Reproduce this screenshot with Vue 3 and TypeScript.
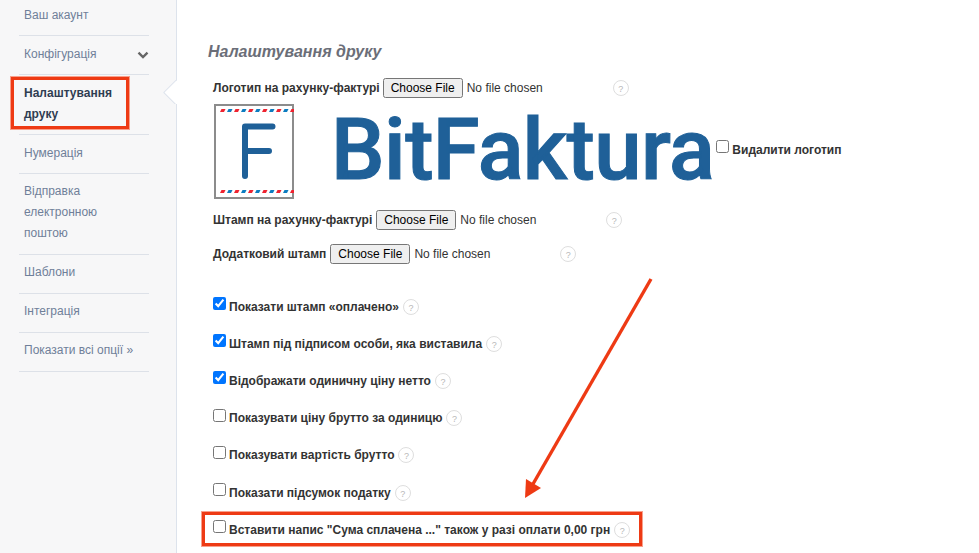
<script setup lang="ts">
const nav: { label: string; active?: boolean; chevron?: boolean }[] = [
  { label: 'Ваш акаунт' },
  { label: 'Конфігурація', chevron: true },
  { label: 'Налаштування друку', active: true },
  { label: 'Нумерація' },
  { label: 'Відправка електронною поштою' },
  { label: 'Шаблони' },
  { label: 'Інтеграція' },
  { label: 'Показати всі опції »' },
]
const files = [
  { label: 'Штамп на рахунку-фактурі', cls: 'f1' },
  { label: 'Додатковий штамп', cls: 'f2' },
]
const checks = [
  { label: 'Показати штамп «оплачено»', on: true },
  { label: 'Штамп під підписом особи, яка виставила', on: true },
  { label: 'Відображати одиничну ціну нетто', on: true },
  { label: 'Показувати ціну брутто за одиницю', on: false },
  { label: 'Показувати вартість брутто', on: false },
  { label: 'Показати підсумок податку', on: false },
  { label: 'Вставити напис "Сума сплачена ..." також у разі оплати 0,00 грн', on: false, boxed: true },
]
const dashes = Array.from({ length: 11 }, (_, i) => i)
</script>

<template>
  <div class="page">
    <aside class="side">
      <ul class="nav">
        <li v-for="n in nav" :key="n.label" :class="{ active: n.active }">
          <span class="nav-text">{{ n.label }}</span>
          <svg v-if="n.chevron" class="chev" width="12" height="8" viewBox="0 0 12 8">
            <path d="M1.5 1.6 L6 6 L10.5 1.6" fill="none" stroke="#666" stroke-width="2.4" />
          </svg>
          <span v-if="n.active" class="mark"></span>
        </li>
      </ul>
      <span class="notch"></span>
    </aside>
    <main class="main">
      <h1>Налаштування друку</h1>
      <div class="row first">
        <label class="lbl">Логотип на рахунку-фактурі</label>
        <input class="file" type="file" />
        <span class="help">?</span>
      </div>
      <div class="logo-row">
        <svg class="mark-logo" width="80" height="95" viewBox="0 0 80 95">
          <rect x="1" y="1" width="78" height="93" fill="#fff" stroke="#8c8c8c" stroke-width="2" />
          <g v-for="y in [5, 86]" :key="y">
            <path
              v-for="i in dashes"
              :key="i"
              :d="`M${6 + i * 7} ${y + 3} l1.5 -3 h4 l-1.5 3 z`"
              :fill="i % 2 ? '#0c7cc0' : '#ee2330'"
            />
          </g>
          <path d="M31 72 V22.5 H58.5 M31 47 H55" fill="none" stroke="#1f6098" stroke-width="6" stroke-linecap="round" stroke-linejoin="round" />
        </svg>
        <span class="word">BitFaktura</span>
        <label class="lbl del"><input type="checkbox" /> Видалити логотип</label>
      </div>
      <div v-for="f in files" :key="f.label" class="row" :class="f.cls">
        <label class="lbl">{{ f.label }}</label>
        <input class="file" type="file" />
        <span class="help">?</span>
      </div>
      <div class="checks">
        <div v-for="c in checks" :key="c.label" class="check" :class="{ boxed: c.boxed }">
          <input type="checkbox" :checked="c.on" />
          <label class="lbl">{{ c.label }}</label>
          <span class="help">?</span>
        </div>
      </div>
      <svg class="arrow" width="140" height="230" viewBox="0 0 140 230">
        <line x1="130" y1="4" x2="12" y2="209" stroke="#ee3a14" stroke-width="3.4" />
        <path d="M4 223 L5 204 L20 213 Z" fill="#ee3a14" />
      </svg>
    </main>
  </div>
</template>

<style>
html, body { margin: 0; overflow: hidden; background: #fff; }
</style>

<style scoped>
.page {
  display: flex;
  height: 553px;
  overflow: hidden;
  font-family: "Liberation Sans", Arial, sans-serif;
  font-size: 12px;
  color: #333;
}
.side {
  position: relative;
  flex: 0 0 177px;
  box-sizing: border-box;
  background: #f7f7f8;
  border-right: 1px solid #dde3ec;
  padding-left: 19px;
}
.nav {
  list-style: none;
  margin: 0;
  padding: 0;
  width: 130px;
}
.nav li {
  position: relative;
  display: flex;
  padding: 8px 5px 9px;
  line-height: 21px;
  border-bottom: 1px solid #dde1e8;
  color: #6f7f99;
}
.nav li:first-child { padding-top: 5px; }
.nav li:nth-child(n+5) { padding: 7px 5px 10px; }
.nav li .nav-text { flex: 1; max-width: 96px; }
.nav li:nth-child(5) .nav-text { max-width: 90px; }
.nav li:last-child .nav-text { max-width: none; white-space: nowrap; }
.nav li.active { color: #2f3d52; font-weight: 700; }
.chev { position: absolute; right: 0; top: 15px; }
.mark {
  position: absolute;
  left: -8px;
  top: 2px;
  width: 112px;
  height: 46px;
  border: 3px solid #ee3a14;
  box-shadow: 0 0 0 1px #f8a08c;
}
.notch {
  position: absolute;
  right: -1px;
  top: 80px;
  width: 24px;
  height: 24px;
  overflow: hidden;
}
.notch::before {
  content: "";
  position: absolute;
  left: 14px;
  top: 3px;
  width: 17px;
  height: 17px;
  background: #fff;
  border: 1px solid #dde3ec;
  transform: rotate(45deg);
}
.main {
  position: relative;
  flex: 1;
  padding-left: 31px;
}
h1 {
  margin: 43px 0 0;
  font-size: 16px;
  line-height: 18px;
  font-style: italic;
  font-weight: 700;
  color: #6b6e78;
}
.row {
  display: flex;
  align-items: center;
  padding-left: 5px;
  height: 20px;
}
.row.first { margin-top: 17px; }
.row.f1 { margin-top: 11px; }
.row.f2 { margin-top: 14px; }
.row.f1 .file, .row.f2 .file { margin-left: 4px; }
.lbl { font-weight: 700; color: #333; white-space: nowrap; }
.file {
  margin-left: 3px;
  font-size: 12px;
  font-family: "Liberation Sans", Arial, sans-serif;
  color: #333;
  width: 230px;
}
.help {
  flex: none;
  box-sizing: border-box;
  width: 16px;
  height: 16px;
  border: 1px solid #dedede;
  border-radius: 50%;
  text-align: center;
  font-size: 9px;
  line-height: 16px;
  font-weight: 400;
  color: #b8b8b8;
  background: #fff;
}
.logo-row {
  display: flex;
  align-items: flex-start;
  margin-top: 6px;
  padding-left: 6px;
  height: 95px;
}
.mark-logo { flex: none; }
.word {
  flex: none;
  width: 381px;
  margin-left: 37px;
  margin-top: -1px;
  font-family: Roboto, sans-serif;
  font-weight: 500;
  font-size: 85px;
  letter-spacing: -0.6px;
  line-height: 95px;
  color: #1f6098;
  white-space: nowrap;
  -webkit-text-stroke: 1px #1f6098;
}
.del { margin: 36px 0 0 4px; display: block; }
.del input { margin: 0; vertical-align: 1px; }
.checks { margin-top: 24px; padding-left: 5px; }
.check {
  position: relative;
  display: flex;
  align-items: center;
  height: 37.2px;
}
.check input { margin: 0 3px 0 0; position: relative; top: -3px; }
.check .help { margin-left: 4px; }
.check.boxed::after {
  content: "";
  position: absolute;
  left: -11px;
  top: 1px;
  width: 434px;
  height: 28px;
  border: 3px solid #ee3a14;
  box-shadow: 0 0 0 1px #f8a08c;
  pointer-events: none;
}
.arrow { position: absolute; left: 344px; top: 275px; }
</style>
